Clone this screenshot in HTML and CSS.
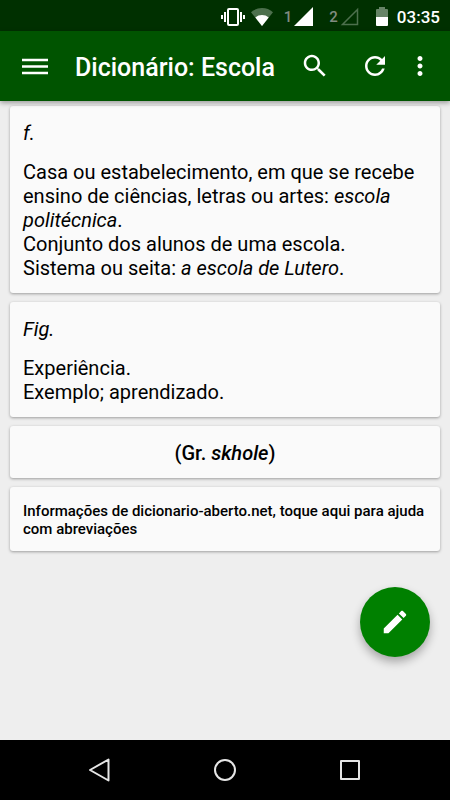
FILE: index.html
```html
<!DOCTYPE html>
<html lang="pt">
<head>
  <meta charset="UTF-8" />
  <meta name="viewport" content="width=device-width, initial-scale=1" />
  <title>Dicionário: Escola</title>
  <link rel="stylesheet" href="styles.css">
</head>
<body>
  <div class="status-bar">
    <svg class="status-vibrate" width="24" height="20" viewBox="0 0 24 20" aria-hidden="true">
      <rect x="7" y="2" width="10" height="16" rx="1" fill="none" stroke="#fff" stroke-width="2" />
      <path d="M4 5v10M20 5v10M1 8v4M23 8v4" stroke="#fff" stroke-width="2" />
    </svg>
    <svg class="status-wifi" width="22" height="18" viewBox="0 0 22 18" aria-hidden="true">
      <path d="M11 18L0 4.200C3 1.600 6.800 0 11 0s8 1.600 11 4.200z" fill="#4d704d" />
      <path d="M11 18L4.300 9.500C6.200 7.800 8.500 7 11 7s4.800.8 6.700 2.500z" fill="#fff" />
    </svg>
    <div class="sim sim-first">
      <span>1</span>
      <svg width="19" height="19" viewBox="0 0 19 19" aria-hidden="true"><path d="M19 0v19H0z" fill="#fff" /></svg>
    </div>
    <div class="sim sim-second">
      <span>2</span>
      <svg width="19" height="19" viewBox="0 0 19 19" aria-hidden="true"><path d="M17.500 2.500v15H2.500z" fill="none" stroke="#4d704d" stroke-width="1.500" /></svg>
    </div>
    <svg class="status-battery" width="12" height="19" viewBox="0 0 12 19" aria-hidden="true">
      <path d="M3 0h6v2h2q1 0 1 1v7H0V3q0-1 1-1h2z" fill="#668466" />
      <path d="M0 10h12v8q0 1-1 1H1q-1 0-1-1z" fill="#fff" />
    </svg>
    <time class="clock">03:35</time>
  </div>

  <header class="app-bar">
    <button class="icon-button" aria-label="Menu">
      <svg width="30" height="30" viewBox="0 0 30 30"><path d="M2 9h26M2 15.500h26M2 22h26" stroke="#fff" stroke-width="2.600" /></svg>
    </button>
    <h1 class="title">Dicionário: Escola</h1>
    <button class="icon-button" aria-label="Pesquisar">
      <svg width="30" height="30" viewBox="0 0 24 24"><path fill="#fff" d="M15.500 14h-.79l-.28-.27C15.410 12.590 16 11.110 16 9.500 16 5.910 13.090 3 9.500 3S3 5.910 3 9.500 5.910 16 9.500 16c1.610 0 3.090-.59 4.230-1.570l.27.28v.79l5 4.990L20.490 19l-4.990-5zm-6 0C7.010 14 5 11.990 5 9.500S7.010 5 9.500 5 14 7.010 14 9.500 11.990 14 9.500 14z" /></svg>
    </button>
    <button class="icon-button refresh" aria-label="Atualizar">
      <svg width="30" height="30" viewBox="0 0 24 24"><path fill="#fff" d="M17.650 6.350C16.200 4.900 14.210 4 12 4c-4.420 0-7.990 3.580-7.990 8s3.570 8 7.990 8c3.730 0 6.840-2.550 7.730-6h-2.080c-.82 2.330-3.040 4-5.650 4-3.310 0-6-2.690-6-6s2.690-6 6-6c1.660 0 3.140.69 4.220 1.780L13 11h7V4l-2.350 2.350z" /></svg>
    </button>
    <button class="icon-button more" aria-label="Mais opções">
      <svg width="30" height="30" viewBox="0 0 24 24"><path fill="#fff" d="M12 8c1.100 0 2-.9 2-2s-.9-2-2-2-2 .9-2 2 .9 2 2 2zm0 2c-1.100 0-2 .9-2 2s.9 2 2 2 2-.9 2-2-.9-2-2-2zm0 6c-1.100 0-2 .9-2 2s.9 2 2 2 2-.9 2-2-.9-2-2-2z" /></svg>
    </button>
  </header>

  <main class="content">
    <section class="card">
      <p class="label"><em>f.</em></p>
      <p>Casa ou estabelecimento, em que se recebe ensino de ciências, letras ou artes: <em>escola politécnica</em>.</p>
      <p>Conjunto dos alunos de uma escola.</p>
      <p>Sistema ou seita: <em>a escola de Lutero</em>.</p>
    </section>
    <section class="card">
      <p class="label"><em>Fig.</em></p>
      <p>Experiência.</p>
      <p>Exemplo; aprendizado.</p>
    </section>
    <section class="card origin">
      <p>(Gr. <em>skhole</em>)</p>
    </section>
    <a href="#" class="card info">Informações de dicionario-aberto.net, toque aqui para ajuda com abreviações</a>

    <button class="fab" aria-label="Editar">
      <svg width="30" height="30" viewBox="0 0 24 24"><path fill="#fff" d="M3 17.250V21h3.750L17.810 9.940l-3.750-3.750L3 17.250zM20.710 7.040c.39-.39.39-1.020 0-1.410l-2.340-2.340c-.39-.39-1.020-.39-1.410 0l-1.830 1.830 3.750 3.750 1.830-1.830z" /></svg>
    </button>
  </main>

  <nav class="nav-bar">
    <button class="icon-button" aria-label="Voltar">
      <svg width="24" height="24" viewBox="0 0 24 24"><path d="M20.500 1.500v21L2 12z" fill="none" stroke="#e6e6e6" stroke-width="2" stroke-linejoin="round" /></svg>
    </button>
    <button class="icon-button" aria-label="Início">
      <svg width="24" height="24" viewBox="0 0 24 24"><circle cx="12" cy="12" r="10" fill="none" stroke="#e6e6e6" stroke-width="2" /></svg>
    </button>
    <button class="icon-button" aria-label="Recentes">
      <svg width="24" height="24" viewBox="0 0 24 24"><rect x="3" y="3" width="18" height="18" fill="none" stroke="#e6e6e6" stroke-width="2" stroke-linejoin="round" /></svg>
    </button>
  </nav>
</body>
</html>
```

FILE: styles.css
```css
* { box-sizing: border-box; }
body { display: flex; flex-direction: column; min-height: 100vh; margin: 0; background: #eee; color: #000; font-family: Roboto, sans-serif; font-size: 20px; line-height: 24px; }
p { margin: 0; }
svg { display: block; }

.status-bar { display: flex; align-items: center; justify-content: flex-end; height: 31px; padding: 2px 10px 0; background: #003000; color: #fff; }
.status-wifi { margin-left: 6px; }
.sim { display: flex; align-items: center; gap: 2px; color: #808c80; font-size: 15px; font-weight: 500; }
.sim-first { margin-left: 11px; }
.sim-second { margin-left: 16px; }
.status-battery { margin-left: 17px; }
.clock { margin-left: 9px; font-size: 17px; font-weight: 500; }

.app-bar { display: flex; align-items: center; height: 70px; padding: 0 15px 0 20px; background: #005400; color: #fff; box-shadow: 0 2px 5px rgba(0,0,0,0.35); position: relative; z-index: 1; }
.title { flex: 1; margin: 0 0 0 25px; padding-top: 3px; font-size: 25px; font-weight: 500; line-height: 30px; white-space: nowrap; }
.icon-button { padding: 0; border: none; background: none; cursor: pointer; }
.refresh { margin-left: 30px; }
.more { margin-left: 15px; }

.content { position: relative; flex: 1; display: flex; flex-direction: column; gap: 9px; padding: 5px 10px; }
.card { padding: 15px 13px 13px; background: #fafafa; border-radius: 3px; box-shadow: 0 1px 3px rgba(0,0,0,0.35); }
.label { margin-bottom: 15px; }
.origin { text-align: center; font-weight: 500; }
.info { color: #000; font-size: 15px; font-weight: 500; line-height: 18px; text-decoration: none; }

.fab { display: flex; align-items: center; justify-content: center; position: absolute; right: 20px; bottom: 83px; width: 70px; height: 70px; padding: 0; border: none; border-radius: 50%; background: #008000; box-shadow: 0 5px 10px rgba(0,0,0,0.3); cursor: pointer; }

.nav-bar { display: flex; align-items: center; justify-content: center; gap: 101px; height: 60px; background: #000; }
```
